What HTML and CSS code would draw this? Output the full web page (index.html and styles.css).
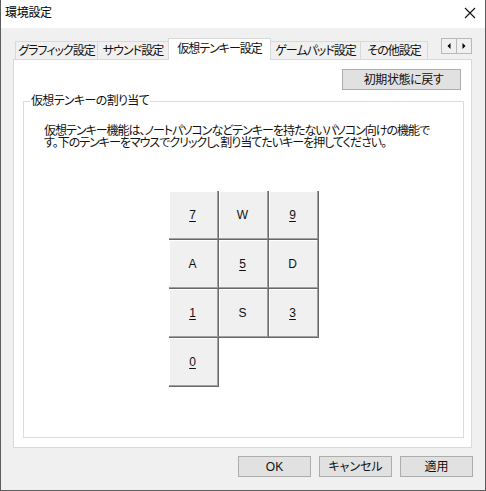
FILE: index.html
```html
<!DOCTYPE html>
<html lang="ja">
<head>
<meta charset="utf-8">
<title>環境設定</title>
<link rel="stylesheet" href="styles.css">
</head>
<body>
<div class="window">
  <div class="titlebar">
    <span class="title">環境設定</span>
    <svg class="close" width="12" height="12" viewBox="0 0 12 12"><path d="M1 1 L11 11 M11 1 L1 11" stroke="#111" stroke-width="1.1" fill="none"/></svg>
  </div>
  <div class="body">
    <div class="tabstrip">
      <div class="tab t1">グラフィック設定</div>
      <div class="tab t2">サウンド設定</div>
      <div class="tab t3 selected">仮想テンキー設定</div>
      <div class="tab t4">ゲームパッド設定</div>
      <div class="tab t5">その他設定</div>
      <div class="scroller">
        <span class="sbtn"><svg width="4" height="6" viewBox="0 0 4 6"><path d="M3.5 0 L0.5 3 L3.5 6 Z" fill="#000"/></svg></span>
        <span class="sbtn"><svg width="4" height="6" viewBox="0 0 4 6"><path d="M0.5 0 L3.5 3 L0.5 6 Z" fill="#000"/></svg></span>
      </div>
    </div>
    <div class="panel">
      <div class="toolbar"><button class="btn reset">初期状態に戻す</button></div>
      <fieldset class="group">
        <legend class="legend">仮想テンキーの割り当て</legend>
        <div class="desc">
          <div class="line">仮想テンキー機能は、ノートパソコンなどテンキーを持たないパソコン向けの機能で</div>
          <div class="line">す。下のテンキーをマウスでクリックし、割り当てたいキーを押してください。</div>
        </div>
        <div class="pad">
          <div class="key"><u>7</u></div>
          <div class="key">W</div>
          <div class="key"><u>9</u></div>
          <div class="key">A</div>
          <div class="key"><u>5</u></div>
          <div class="key">D</div>
          <div class="key"><u>1</u></div>
          <div class="key">S</div>
          <div class="key"><u>3</u></div>
          <div class="key"><u>0</u></div>
        </div>
      </fieldset>
    </div>
    <div class="footer">
      <button class="btn foot">OK</button>
      <button class="btn foot">キャンセル</button>
      <button class="btn foot">適用</button>
    </div>
  </div>
</div>
</body>
</html>
```

FILE: styles.css
```css
* { box-sizing: border-box; }
html, body { margin: 0; padding: 0; background: #f0f0f0; }
body {
  font-family: "Liberation Sans", "Noto Sans CJK JP", sans-serif;
  font-size: 12px;
  color: #000;
  font-feature-settings: "palt";
}
.window {
  width: 486px;
  height: 491px;
  border-left: 1px solid #5c5c5c;
  border-right: 1px solid #5c5c5c;
  border-bottom: 1px solid #5c5c5c;
  display: flex;
  flex-direction: column;
  background: #f0f0f0;
}
.titlebar {
  height: 28px;
  background: #fff;
  display: flex;
  align-items: center;
  justify-content: space-between;
  padding: 0 9px 2px 4px;
}
.title { font-size: 12px; line-height: 14px; letter-spacing: -0.3px; }
.close { display: block; }
.body { flex: 1; display: flex; flex-direction: column; }
.tabstrip {
  display: flex;
  align-items: flex-end;
  height: 31px;
  padding-left: 14px;
  position: relative;
  z-index: 1;
}
.tab {
  height: 18px;
  border: 1px solid #d9d9d9;
  border-bottom: none;
  background: #f0f0f0;
  margin-left: -1px;
  display: flex;
  align-items: center;
  justify-content: center;
  font-size: 12px;
  line-height: 14px;
  white-space: nowrap;
  letter-spacing: -1px;
  color: #111;
}
.t1 { width: 83px; margin-left: 0; }
.t2 { width: 72px; }
.t3 { width: 103px; }
.t4 { width: 91px; }
.t5 { width: 68px; }
.tab.selected {
  height: 22px;
  margin-bottom: -1px;
  background: #fff;
  position: relative;
  z-index: 2;
  padding-bottom: 2px;
}
.scroller {
  display: flex;
  margin-left: 13px;
  align-self: flex-start;
  margin-top: 10px;
}
.sbtn {
  width: 16px;
  height: 16px;
  border: 1px solid #b9b9b9;
  background: #f0f0f0;
  display: flex;
  align-items: center;
  justify-content: center;
  margin-left: -1px;
}
.sbtn:first-child { margin-left: 0; }
.sbtn svg { display: block; }
.panel {
  width: 459px;
  height: 389px;
  margin-left: 12px;
  background: #fff;
  border: 1px solid #d9d9d9;
  display: flex;
  flex-direction: column;
  padding: 9px 7px 9px 9px;
}
.toolbar { display: flex; justify-content: flex-end; padding-right: 3px; }
.btn {
  font-family: "Liberation Sans", "Noto Sans CJK JP", sans-serif;
  font-feature-settings: "palt";
  font-size: 12px;
  line-height: 14px;
  background: #e1e1e1;
  border: 1px solid #adadad;
  color: #111;
  padding: 0;
  margin: 0;
  border-radius: 0;
}
.reset { width: 119px; height: 21px; padding-left: 4px; letter-spacing: -0.4px; }
.group {
  flex: 1;
  margin: 4px 0 0 0;
  padding: 0;
  border: 1px solid #dcdcdc;
  min-width: 0;
}
.legend {
  margin-left: 6px;
  padding: 0 1px;
  font-size: 12px;
  line-height: 14px;
  letter-spacing: -0.65px;
  color: #111;
}
.desc {
  margin: 17px 0 0 20px;
  font-size: 12px;
  letter-spacing: -1px;
  white-space: nowrap;
  color: #111;
}
.line { height: 12px; line-height: 12px; }
.pad {
  margin: 42px auto 0;
  width: 150px;
  display: grid;
  grid-template-columns: repeat(3, 50px);
  grid-auto-rows: 49px;
}
.key {
  background: #f0f0f0;
  box-shadow: inset -1px -1px #696969, inset -2px -2px #a0a0a0, inset 1px 1px #fff;
  display: flex;
  align-items: center;
  justify-content: center;
  font-family: "Liberation Sans", sans-serif;
  font-size: 12px;
  padding: 0 2px 2px 0;
  color: #111;
}
.key u { text-underline-offset: 2px; }
.footer {
  display: flex;
  justify-content: flex-end;
  gap: 8px;
  padding: 8px 12px 0 0;
}
.foot { width: 73px; height: 21px; }
```
